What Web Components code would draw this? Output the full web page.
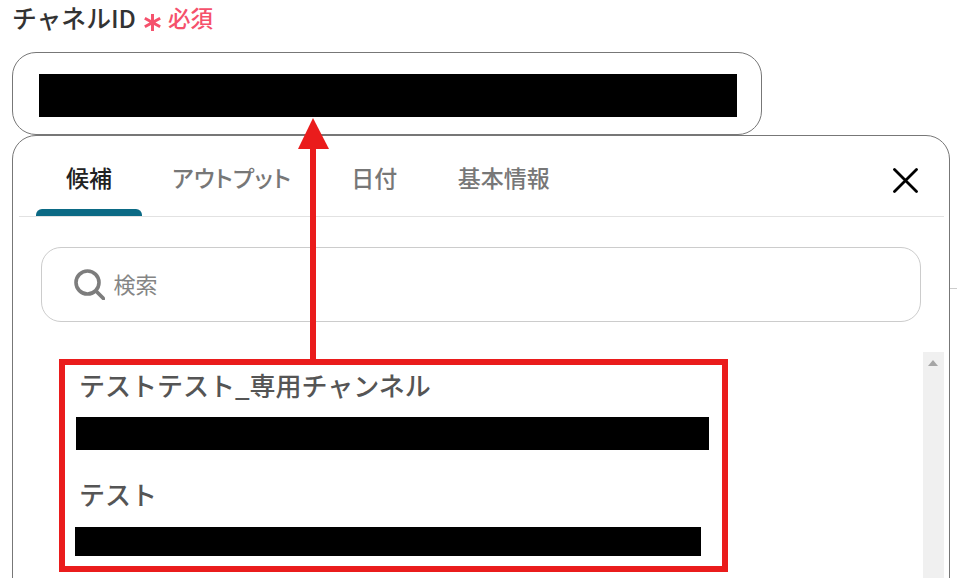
<!DOCTYPE html>
<html lang="ja">
<head>
<meta charset="utf-8">
<title>チャネルID</title>
<style>
  html, body { margin: 0; height: 578px; overflow: hidden; background: #fff; }
  body { font-family: "Noto Sans CJK JP", "Noto Sans", sans-serif; position: relative; }
</style>
</head>
<body>
  <field-label required>チャネルID</field-label>
  <id-field></id-field>
  <candidate-panel>
    <tab-bar slot="tabs"></tab-bar>
    <search-box slot="search" placeholder="検索"></search-box>
    <option-row name="テストテスト_専用チャンネル" bar-left="-3" bar-width="633" bar-height="33" gap="10"></option-row>
    <option-row name="テスト" bar-left="-4" bar-width="626" bar-height="29" gap="11" top="22"></option-row>
  </candidate-panel>
  <callout-mark></callout-mark>

<script>
(function () {
  'use strict';

  /* 共用 */
  function shadow(el, html) {
    el.attachShadow({ mode: 'open' }).innerHTML = html;
  }

  class FieldLabel extends HTMLElement {
    connectedCallback() {
      shadow(this, `
        <style>
          :host { display: flex; align-items: center; height: 34px; padding-left: 12px; margin-bottom: 18px; }
          .t { font-size: 24.8px; font-weight: 500; color: #333; line-height: 34px; }
          .star { width: 17px; height: 17px; margin: 10px 7px 0 8px; color: #f5516c; }
          .req { font-size: 22.5px; font-weight: 500; color: #f5516c; line-height: 34px; }
        </style>
        <span class="t"><slot></slot></span>
        <svg class="star" viewBox="0 0 16 16" fill="none" stroke="currentColor" stroke-width="2.8">
          <path d="M8 0V16M0.8 4L15.2 12M15.2 4L0.8 12"/>
        </svg>
        <span class="req">必須</span>`);
    }
  }

  class IdField extends HTMLElement {
    connectedCallback() {
      shadow(this, `
        <style>
          :host { display: block; box-sizing: border-box; width: 750px; height: 83px; margin-left: 12px;
                  padding: 21px 24px 0 26px; border: 1px solid #777; border-radius: 24px; background: #fff; }
          .mask { height: 43px; background: #000; }
        </style>
        <div class="mask"></div>`);
    }
  }

  class TabBar extends HTMLElement {
    connectedCallback() {
      const tabs = [['候補', true], ['アウトプット', false], ['日付', false], ['基本情報', false]];
      shadow(this, `
        <style>
          :host { display: flex; box-sizing: border-box; height: 81px; padding-left: 17px; border-bottom: 1px solid #e2e2e2; }
          .tab { position: relative; box-sizing: border-box; padding: 0 30px; line-height: 82px; font-size: 23px;
                 font-weight: 500; color: #777; white-space: nowrap; }
          .tab:last-child { margin-left: .5px; }
          .tab.kana { font-feature-settings: "palt"; letter-spacing: .4px; }
          .tab.on { color: #222; }
          .tab.on::after { content: ""; position: absolute; left: 0; right: 0; bottom: 0; height: 7px;
                           background: #0b6a85; border-radius: 6px 6px 0 0; }
        </style>
        ${tabs.map(t => `<div class="tab${t[1] ? ' on' : ''}${t[0] === 'アウトプット' ? ' kana' : ''}">${t[0]}</div>`).join('')}`);
    }
  }

  class SearchBox extends HTMLElement {
    connectedCallback() {
      shadow(this, `
        <style>
          :host { display: flex; align-items: center; box-sizing: border-box; width: 880px; height: 75px; margin-left: 22px;
                  padding-left: 32px; border: 1px solid #ccc; border-radius: 20px; }
          svg { width: 31px; height: 31px; flex: none; }
          span { margin: -2px 0 0 8.5px; font-size: 22px; color: #858585; line-height: 73px; }
        </style>
        <svg viewBox="0 0 31 31" fill="none" stroke="#7d7d7d">
          <circle cx="13.5" cy="13.5" r="11.5" stroke-width="3.6"/>
          <path d="M22 22L29.5 29.5" stroke-width="3.8" stroke-linecap="round"/>
        </svg>
        <span>${this.getAttribute('placeholder')}</span>`);
    }
  }

  class OptionRow extends HTMLElement {
    connectedCallback() {
      const left = this.getAttribute('bar-left');
      shadow(this, `
        <style>
          :host { display: block; margin-top: ${this.getAttribute('top') || 0}px; }
          .name { height: 44px; font-size: 26px; font-weight: 500; line-height: 44px; color: #555; white-space: nowrap; }
          .mask { margin-top: ${this.getAttribute('gap')}px; margin-left: ${left}px; width: ${this.getAttribute('bar-width')}px;
                  height: ${this.getAttribute('bar-height')}px; background: #000; }
        </style>
        <div class="name">${this.getAttribute('name')}</div>
        <div class="mask"></div>`);
    }
  }

  class CandidatePanel extends HTMLElement {
    connectedCallback() {
      shadow(this, `
        <style>
          :host { display: block; box-sizing: border-box; width: 938px; height: 470px; margin-left: 12px;
                  padding: 0 5px 0 6px; border: 1px solid #777; border-radius: 24px; background: #fff; }
          .close { position: absolute; left: 893px; top: 168px; width: 25px; height: 25px; }
          .search { padding-top: 30px; }
          .body { display: flex; justify-content: space-between; margin-top: 30px; height: 226px; }
          .list { padding: 11px 0 0 60px; }
          .bar { position: relative; width: 21px; background: #f0f0f0; }
          .bar::before { content: ""; position: absolute; left: 5px; top: 8px; border: 5.5px solid transparent;
                         border-top: 0; border-bottom: 6px solid #a6a6a6; }
        </style>
        <slot name="tabs"></slot>
        <svg class="close" viewBox="0 0 25 25" fill="none" stroke="#000" stroke-width="2.8" stroke-linecap="round">
          <path d="M1.5 1.5L23.5 23.5M23.5 1.5L1.5 23.5"/>
        </svg>
        <div class="search"><slot name="search"></slot></div>
        <div class="body">
          <div class="list"><slot></slot></div>
          <div class="bar"></div>
        </div>`);
    }
  }

  /* 注釈: 赤枠と矢印は画面の上に重ねる */
  class CalloutMark extends HTMLElement {
    connectedCallback() {
      shadow(this, `
        <style>
          :host { display: block; position: absolute; inset: 0; pointer-events: none; }
          svg { position: absolute; left: 0; top: 0; }
        </style>
        <svg width="957" height="578" viewBox="0 0 957 578">
          <path d="M950 288.5H957" stroke="#ccc" stroke-width="1"/>
          <rect x="62" y="362" width="663" height="207" fill="none" stroke="#ea1c1c" stroke-width="6"/>
          <path d="M313 359V148" stroke="#ea1c1c" stroke-width="6"/>
          <path d="M313 118L329 149H298Z" fill="#ea1c1c"/>
        </svg>`);
    }
  }

  customElements.define('field-label', FieldLabel);
  customElements.define('id-field', IdField);
  customElements.define('tab-bar', TabBar);
  customElements.define('search-box', SearchBox);
  customElements.define('option-row', OptionRow);
  customElements.define('candidate-panel', CandidatePanel);
  customElements.define('callout-mark', CalloutMark);
})();
</script>
</body>
</html>
